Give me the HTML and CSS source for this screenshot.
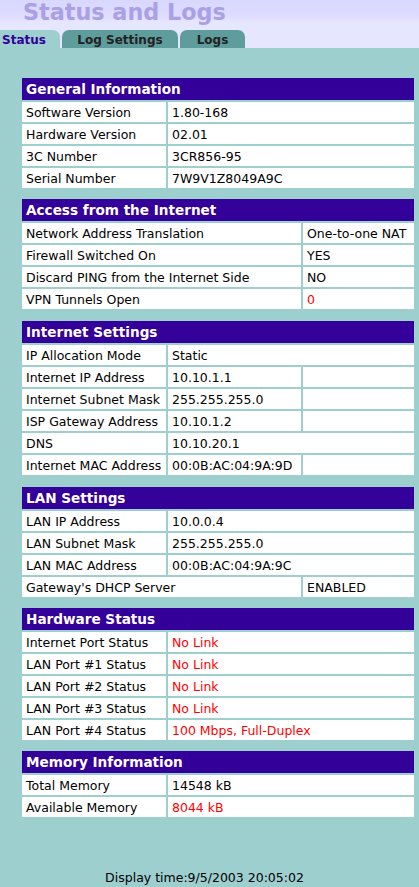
FILE: index.html
```html
<!DOCTYPE html>
<html>
<head>
<meta charset="utf-8">
<title>Status and Logs</title>
<link rel="stylesheet" href="styles.css">
</head>
<body>
<div class="top">
  <div class="title">Status and Logs</div>
  <div class="tabs">
    <div class="tab tab-active">Status</div>
    <div class="tab tab-log">Log Settings</div>
    <div class="tab tab-logs">Logs</div>
  </div>
</div>
<div class="content">
  <div class="section">
    <div class="head">General Information</div>
    <div class="cell">Software Version</div><div class="cell span2">1.80-168</div>
    <div class="cell">Hardware Version</div><div class="cell span2">02.01</div>
    <div class="cell">3C Number</div><div class="cell span2">3CR856-95</div>
    <div class="cell">Serial Number</div><div class="cell span2">7W9V1Z8049A9C</div>
  </div>
  <div class="section wide-gap">
    <div class="head">Access from the Internet</div>
    <div class="cell span2">Network Address Translation</div><div class="cell">One-to-one NAT</div>
    <div class="cell span2">Firewall Switched On</div><div class="cell">YES</div>
    <div class="cell span2">Discard PING from the Internet Side</div><div class="cell">NO</div>
    <div class="cell span2">VPN Tunnels Open</div><div class="cell red">0</div>
  </div>
  <div class="section wide-gap">
    <div class="head">Internet Settings</div>
    <div class="cell">IP Allocation Mode</div><div class="cell span2">Static</div>
    <div class="cell">Internet IP Address</div><div class="cell">10.10.1.1</div><div class="cell"></div>
    <div class="cell">Internet Subnet Mask</div><div class="cell">255.255.255.0</div><div class="cell"></div>
    <div class="cell">ISP Gateway Address</div><div class="cell">10.10.1.2</div><div class="cell"></div>
    <div class="cell">DNS</div><div class="cell span2">10.10.20.1</div>
    <div class="cell">Internet MAC Address</div><div class="cell">00:0B:AC:04:9A:9D</div><div class="cell"></div>
  </div>
  <div class="section">
    <div class="head">LAN Settings</div>
    <div class="cell">LAN IP Address</div><div class="cell span2">10.0.0.4</div>
    <div class="cell">LAN Subnet Mask</div><div class="cell span2">255.255.255.0</div>
    <div class="cell">LAN MAC Address</div><div class="cell span2">00:0B:AC:04:9A:9C</div>
    <div class="cell span2">Gateway's DHCP Server</div><div class="cell">ENABLED</div>
  </div>
  <div class="section">
    <div class="head">Hardware Status</div>
    <div class="cell">Internet Port Status</div><div class="cell span2 red">No Link</div>
    <div class="cell">LAN Port #1 Status</div><div class="cell span2 red">No Link</div>
    <div class="cell">LAN Port #2 Status</div><div class="cell span2 red">No Link</div>
    <div class="cell">LAN Port #3 Status</div><div class="cell span2 red">No Link</div>
    <div class="cell">LAN Port #4 Status</div><div class="cell span2 red">100 Mbps, Full-Duplex</div>
  </div>
  <div class="section">
    <div class="head">Memory Information</div>
    <div class="cell">Total Memory</div><div class="cell span2">14548 kB</div>
    <div class="cell">Available Memory</div><div class="cell span2 red">8044 kB</div>
  </div>
  <div class="footer">Display time:9/5/2003 20:05:02</div>
</div>
</body>
</html>
```

FILE: styles.css
```css
html, body {
  margin: 0;
  padding: 0;
}
body {
  background: #9ecfcf;
  font-family: "DejaVu Sans", Verdana, sans-serif;
  color: #000;
  min-height: 887px;
}
.top {
  height: 48px;
  background: linear-gradient(to bottom, #d8d8ff 0px, #dcdaff 12px, #e2deff 18px, #e6e6ff 22px, #e6e6ff 100%);
  display: flex;
  flex-direction: column;
  justify-content: space-between;
}
.title {
  font-size: 22.3px;
  font-weight: bold;
  color: #aaa0e6;
  padding-left: 23px;
  line-height: 26px;
  margin-top: -1px;
}
.tabs {
  display: flex;
  gap: 2px;
  height: 18px;
  align-items: flex-end;
}
.tab {
  height: 18px;
  font-size: 12px;
  font-weight: bold;
  line-height: 20px;
  color: #222;
  background: #5f9c9c;
  border-radius: 7px 7px 0 0;
  text-align: center;
}
.tab-active {
  width: 60px;
  background: #9ecfcf;
  color: #330099;
  border-radius: 0 7px 0 0;
  text-align: left;
  padding-left: 2px;
  box-sizing: border-box;
}
.tab-log {
  width: 116px;
}
.tab-logs {
  width: 65px;
}
.content {
  padding: 30px 5px 0 22px;
}
.section {
  display: grid;
  grid-template-columns: 144px 133px 111px;
  gap: 2px;
  width: 392px;
  margin-bottom: 11px;
}
.wide-gap {
  margin-bottom: 12px;
}
.head {
  grid-column: 1 / 4;
  background: #330099;
  color: #fff;
  font-weight: bold;
  font-size: 13.6px;
  height: 22px;
  line-height: 23px;
  padding-left: 4px;
  white-space: nowrap;
}
.cell {
  background: #fff;
  height: 20px;
  line-height: 21px;
  font-size: 12.5px;
  padding-left: 4px;
  white-space: nowrap;
  overflow: hidden;
}
.span2 {
  grid-column: span 2;
}
.red {
  color: #ff0000;
}
.footer {
  font-size: 12.5px;
  line-height: 14px;
  text-align: center;
  width: 365px;
  margin-top: 54px;
}
```
